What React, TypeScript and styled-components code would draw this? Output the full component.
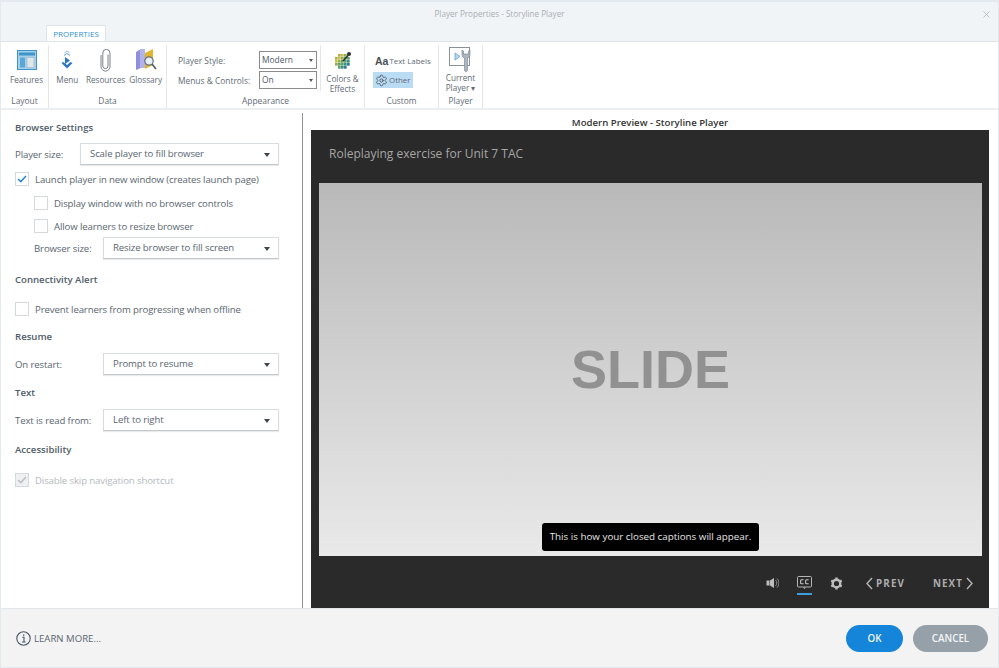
import React from 'react';
import styled, { createGlobalStyle } from 'styled-components';
import { X, Settings as SettingsGlyph } from 'lucide-react';

const GlobalStyle = createGlobalStyle`
  html, body { margin: 0; padding: 0; background: #fff; }
  body { font-family: "Open Sans", "Noto Sans", sans-serif; color: #4d5a66; }
`;

const Win = styled.div`
  width: 999px;
  height: 668px;
  box-sizing: border-box;
  border: 2px solid #e4e9ed;
  border-width: 2px 1px 1px 1px;
  display: flex;
  flex-direction: column;
  overflow: hidden;
  background: #fff;
`;

const TitleBar = styled.div`
  height: 23px;
  flex: none;
  background: #f1f4f7;
  display: flex;
  align-items: center;
  justify-content: center;
  position: relative;
  font-size: 8.1px;
  color: #a9aeb3;
`;

const CloseBtn = styled.span`
  position: absolute;
  right: 6px;
  top: 7px;
  color: #b6bcc2;
  display: flex;
`;

const TabStrip = styled.div`
  height: 16px;
  flex: none;
  background: #f1f4f7;
  border-bottom: 1px solid #dfe4e8;
  padding-left: 45px;
  display: flex;
`;

const Tab = styled.div`
  width: 60px;
  height: 16px;
  box-sizing: border-box;
  background: #fff;
  border: 1px solid #dfe4e8;
  border-bottom: none;
  color: #2f8fd8;
  font-size: 8px;
  text-align: center;
  line-height: 15px;
`;

const Ribbon = styled.div`
  height: 66px;
  flex: none;
  display: flex;
  border-bottom: 2px solid #eceff1;
`;

const Group = styled.div<{ $w: number }>`
  width: ${({ $w }) => $w}px;
  flex: none;
  box-sizing: border-box;
  border-right: 1px solid #e3e7ea;
  margin-top: 3px;
  display: flex;
  flex-direction: column;
`;

const GroupBody = styled.div<{ $pad?: number }>`
  height: 49px;
  box-sizing: border-box;
  padding-left: ${({ $pad }) => $pad ?? 0}px;
  display: flex;
  justify-content: center;
`;

const GroupLabel = styled.div`
  height: 14px;
  line-height: 14px;
  text-align: center;
  font-size: 8.4px;
  color: #5f6b75;
`;

const RibbonButton = styled.div<{ $w: number }>`
  width: ${({ $w }) => $w}px;
  display: flex;
  flex-direction: column;
  align-items: center;
`;

const Caption2 = styled.span`
  font-size: 8.2px;
  line-height: 10px;
  color: #5f6b75;
  text-align: center;
  white-space: nowrap;
`;

const IconSlot = styled.div<{ $top?: number; $bottom?: number }>`
  height: 26px;
  flex: none;
  margin-top: ${({ $top }) => $top ?? 2}px;
  margin-bottom: ${({ $bottom }) => $bottom ?? 2}px;
  display: flex;
  align-items: center;
  justify-content: center;
`;

const StyleForm = styled.div`
  display: flex;
  width: 154px;
  box-sizing: border-box;
  padding: 6px 4px 0 11px;
  height: 46px;
  border-right: 1px solid #e3e7ea;
  flex: none;
`;

const StyleLabels = styled.div`
  width: 81px;
  flex: none;
  font-size: 8.4px;
  color: #5f6b75;
  line-height: 20px;
`;

const StyleSelects = styled.div`
  display: flex;
  flex-direction: column;
  gap: 2px;
`;

const MiniSelect = styled.div`
  width: 58px;
  height: 18px;
  box-sizing: border-box;
  border: 1px solid #8b8b8b;
  font-size: 8.4px;
  line-height: 16px;
  padding-left: 2px;
  color: #4d5a66;
  position: relative;
  &::after {
    content: '';
    position: absolute;
    right: 3px;
    top: 7px;
    border: 2px solid transparent;
    border-top: 3px solid #555;
  }
`;

const CustomCol = styled.div`
  display: flex;
  flex-direction: column;
  gap: 4px;
  box-sizing: border-box;
  padding: 8px 0 0 8px;
  align-items: flex-start;
  width: 73px;
`;

const CustomItem = styled.div<{ $active?: boolean }>`
  display: flex;
  align-items: center;
  gap: 1px;
  height: ${({ $active }) => ($active ? 16 : 15)}px;
  padding: 0 3px 0 2px;
  font-size: 7.9px;
  white-space: nowrap;
  color: #5f6b75;
  background: ${({ $active }) => ($active ? '#b9dbf4' : 'transparent')};
`;

const AaGlyph = styled.span`
  font-size: 10.5px;
  font-weight: 600;
  color: #4a4f55;
  font-family: "Liberation Sans", sans-serif;
`;

const Body = styled.div`
  flex: 1;
  display: flex;
  min-height: 0;
`;

const Settings = styled.div`
  width: 302px;
  flex: none;
  box-sizing: border-box;
  padding: 11px 24px 0 14px;
  position: relative;
  letter-spacing: -0.12px;
  &::after {
    content: '';
    position: absolute;
    right: 0;
    top: 3px;
    bottom: 0;
    width: 1px;
    background: #8d9399;
  }
`;

const Heading = styled.div<{ $top: number }>`
  font-size: 9.6px;
  font-weight: 600;
  color: #4f5d69;
  line-height: 14px;
  letter-spacing: 0;
  margin-top: ${({ $top }) => $top}px;
`;

const FieldRow = styled.div<{ $top: number; $indent?: number }>`
  display: flex;
  align-items: center;
  margin-top: ${({ $top }) => $top}px;
  margin-left: ${({ $indent }) => $indent ?? 0}px;
`;

const FieldLabel = styled.span<{ $w: number }>`
  width: ${({ $w }) => $w}px;
  flex: none;
  font-size: 9.6px;
  color: #5a6670;
`;

const Select = styled.div`
  flex: 1;
  height: 22px;
  box-sizing: border-box;
  border: 1px solid #d7dcdf;
  border-bottom-color: #c3c8cc;
  box-shadow: 0 1px 1px rgba(0, 0, 0, 0.08);
  font-size: 9.6px;
  line-height: 20px;
  padding-left: 9px;
  color: #5a6670;
  position: relative;
  &::after {
    content: '';
    position: absolute;
    right: 8px;
    top: 9px;
    border: 3px solid transparent;
    border-top: 4px solid #3d4650;
    border-bottom: none;
  }
`;

const CheckRow = styled.div<{ $top: number; $indent?: number; $disabled?: boolean }>`
  display: flex;
  align-items: center;
  gap: 6px;
  height: 14px;
  margin-top: ${({ $top }) => $top}px;
  margin-left: ${({ $indent }) => $indent ?? 0}px;
  font-size: 9.6px;
  color: ${({ $disabled }) => ($disabled ? '#b4b9bd' : '#5a6670')};
`;

const CheckBox = styled.span<{ $disabled?: boolean }>`
  width: 14px;
  height: 14px;
  flex: none;
  box-sizing: border-box;
  border: 1px solid #d5d9dc;
  background: ${({ $disabled }) => ($disabled ? '#eef0f1' : '#fff')};
  display: flex;
  align-items: center;
  justify-content: center;
`;

const PreviewPane = styled.div`
  flex: 1;
  padding-left: 8px;
  display: flex;
  flex-direction: column;
  width: 0;
`;

const PreviewTitle = styled.div`
  height: 20px;
  line-height: 26px;
  width: 678px;
  text-align: center;
  font-size: 9.6px;
  font-weight: 600;
  color: #333;
`;

const Player = styled.div`
  width: 678px;
  flex: 1;
  background: #2a2a2a;
  display: flex;
  flex-direction: column;
  padding: 0 7px 0 8px;
  box-sizing: border-box;
`;

const PlayerTitle = styled.div`
  height: 53px;
  line-height: 48px;
  padding-left: 10px;
  font-size: 12px;
  color: #a6a6a6;
`;

const Slide = styled.div`
  height: 373px;
  background: linear-gradient(#b9b9b9, #e9e9e9);
  display: flex;
  align-items: center;
  justify-content: center;
  position: relative;
`;

const SlideText = styled.span`
  font-family: "Liberation Sans", Arial, sans-serif;
  font-weight: 700;
  font-size: 54px;
  color: #919191;
  margin-bottom: 2px;
`;

const Caption = styled.div`
  position: absolute;
  left: 223px;
  bottom: 5px;
  width: 217px;
  height: 28px;
  box-sizing: border-box;
  background: #000;
  border-radius: 3px;
  color: #e6e6e6;
  font-size: 9.8px;
  line-height: 28px;
  text-align: center;
  white-space: nowrap;
`;

const Controls = styled.div`
  flex: 1;
  display: flex;
  align-items: center;
  justify-content: flex-end;
  padding: 2px 9px 0 0;
`;

const NavText = styled.span`
  font-size: 9.8px;
  font-weight: 700;
  letter-spacing: 1.1px;
  color: #adadad;
`;

const NavButton = styled.div<{ $left: number }>`
  display: flex;
  align-items: center;
  gap: 3px;
  margin-left: ${({ $left }) => $left}px;
`;

const IconButton = styled.div<{ $left: number; $active?: boolean }>`
  margin-left: ${({ $left }) => $left}px;
  display: flex;
  position: relative;
  ${({ $active }) =>
    $active &&
    `&::after {
      content: '';
      position: absolute;
      left: 0;
      right: 0;
      bottom: -5px;
      height: 2px;
      background: #3c9ed8;
    }`}
`;

const Footer = styled.div`
  height: 59px;
  flex: none;
  background: #f3f3f3;
  border-top: 1px solid #e3e7ea;
  box-sizing: border-box;
  display: flex;
  align-items: center;
  padding: 0 10px 0 15px;
`;

const LearnMore = styled.div`
  display: flex;
  align-items: center;
  gap: 3px;
  font-size: 9.6px;
  color: #5a6670;
  flex: 1;
`;

const DialogButton = styled.div<{ $w: number; $color: string; $left: number }>`
  width: ${({ $w }) => $w}px;
  height: 27px;
  margin-left: ${({ $left }) => $left}px;
  border-radius: 14px;
  background: ${({ $color }) => $color};
  color: #f2f5f7;
  font-size: 9.8px;
  font-weight: 600;
  line-height: 27px;
  text-align: center;
`;

const FeaturesIcon = () => (
  <svg width="20" height="20" viewBox="0 0 20 20">
    <rect x="0.5" y="0.5" width="19" height="19" fill="#a5d0ec" stroke="#3f93c9" />
    <rect x="2" y="2.5" width="16" height="3" fill="#3f93c9" />
    <rect x="3" y="7.5" width="5" height="10" fill="#5aa7d8" />
    <rect x="10" y="7.5" width="7" height="10" fill="#dfe6ea" stroke="#9fb2bf" strokeWidth="0.6" />
  </svg>
);

const MenuIcon = () => (
  <svg width="14" height="20" viewBox="0 0 14 20" fill="none">
    <path d="M4.5 3 L7 1 L9.5 3" stroke="#8fbde4" strokeWidth="1" />
    <path d="M4 5.5 L7 3.5 L10 5.5" stroke="#6aa6da" strokeWidth="1" />
    <path d="M5 7 L10 10.5 L5 14 Z" fill="#2b76c4" />
    <path d="M1.5 13 L7 18.5 L12.5 13 L10.5 12 L7 15 L3.5 12 Z" fill="#2b76c4" />
  </svg>
);

const ClipIcon = () => (
  <svg width="11" height="24" viewBox="0 0 11 24" fill="none">
    <path
      d="M8 6.5 V18 a2.6 2.6 0 0 1 -5.2 0 V5 a3.6 3.6 0 0 1 7.2 0 V18.5 a4.5 4.5 0 0 1 -9 .2 V7"
      stroke="#7d8185"
      strokeWidth="1"
    />
  </svg>
);

const GlossaryIcon = () => (
  <svg width="22" height="24" viewBox="0 0 22 24">
    <path d="M1 4 L6 1 V20 L1 22 Z" fill="#8f8fdc" />
    <rect x="5" y="1" width="5" height="19" fill="#b3b3ea" />
    <path d="M10 5 L18 1 V17 L10 21 Z" fill="#e2b531" />
    <circle cx="14" cy="13" r="4.2" fill="#e8f0f4" stroke="#66707a" strokeWidth="1.2" />
    <path d="M17 16 L21 21" stroke="#55606a" strokeWidth="1.8" />
  </svg>
);

const ColorsIcon = () => {
  const palette = ['#b9a94a', '#c9c24a', '#8fae52', '#5f9f6a', '#3f8f8a', '#2f7f90'];
  const cells: Array<[number, number, string]> = [];
  for (let row = 0; row < 5; row++) {
    for (let col = 0; col < 5; col++) {
      if ((row === 0 || row === 4) && (col === 0 || col === 4)) continue;
      cells.push([1 + col * 3, 3 + row * 3, palette[Math.min(5, Math.floor((col + row) * 0.75))]]);
    }
  }
  return (
    <svg width="18" height="19" viewBox="0 0 18 19">
      {cells.map(([x, y, c]) => (
        <rect key={`${x}-${y}`} x={x} y={y} width="2.7" height="2.7" fill={c} />
      ))}
      <path d="M9 10 L14.5 4" stroke="#2e3338" strokeWidth="1.5" />
      <circle cx="15" cy="3" r="2" fill="#2e3338" />
    </svg>
  );
};

const CurrentPlayerIcon = () => (
  <svg width="24" height="25" viewBox="0 0 24 25" fill="none">
    <rect x="0.5" y="0.5" width="20" height="18" fill="#fff" stroke="#8a9299" />
    <path d="M6 6 L11 9.5 L6 13 Z" fill="#bcd8ee" stroke="#5f9fd0" strokeWidth="0.8" />
    <path d="M13 3 v5 a3 3 0 0 0 2.5 3 V23 a1.5 1.5 0 0 0 3 0 V11 a3 3 0 0 0 2.5 -3 V3 l-1.5 1 v3 h-5 V4 Z" fill="#aab6c0" stroke="#76828c" strokeWidth="0.6" />
  </svg>
);

const Check = ({ color }: { color: string }) => (
  <svg width="10" height="8" viewBox="0 0 10 8" fill="none">
    <path d="M1 4 L3.8 6.6 L9 1" stroke={color} strokeWidth="1.5" />
  </svg>
);

const InfoIcon = () => (
  <svg width="15" height="15" viewBox="0 0 15 15" fill="none">
    <circle cx="7.5" cy="7.5" r="6.7" stroke="#4a5a68" strokeWidth="1.1" />
    <path d="M6.2 6.3 H8 V11 M6 11 H9.6" stroke="#4a5a68" strokeWidth="1.1" />
    <rect x="7" y="3.4" width="1.3" height="1.4" fill="#4a5a68" />
  </svg>
);

const VolumeIcon = () => (
  <svg width="13" height="12" viewBox="0 0 13 12" fill="none">
    <rect x="0.5" y="3.5" width="3" height="5" fill="#bdbdbd" />
    <path d="M4 3.5 L8 1 V11 L4 8.5 Z" fill="#bdbdbd" />
    <path d="M9.5 3 a4 4 0 0 1 0 6 M11 1.5 a6 6 0 0 1 0 9" stroke="#8a8a8a" />
  </svg>
);

const CcIcon = () => (
  <svg width="15" height="14" viewBox="0 0 15 14" fill="none">
    <rect x="0.5" y="0.5" width="14" height="10.5" rx="1" stroke="#b5b5b5" />
    <path d="M6.6 3.8 h-2 a1 1 0 0 0 -1 1 v2 a1 1 0 0 0 1 1 h2 M11.6 3.8 h-2 a1 1 0 0 0 -1 1 v2 a1 1 0 0 0 1 1 h2" stroke="#c8c8c8" strokeWidth="1.1" />
    <path d="M6 11.5 h3 l-1.5 1.5 Z" fill="#b5b5b5" />
  </svg>
);

const GearIcon = () => (
  <svg width="13" height="13" viewBox="0 0 13 13" fill="none">
    <circle cx="6.5" cy="6.5" r="3.8" stroke="#bdbdbd" strokeWidth="2.4" />
    <path
      d="M6.5 0.5 V2.5 M6.5 10.5 V12.5 M1.3 3.5 L3 4.5 M10 8.5 L11.7 9.5 M1.3 9.5 L3 8.5 M10 4.5 L11.7 3.5"
      stroke="#bdbdbd"
      strokeWidth="2.4"
    />
  </svg>
);

const Chevron = ({ dir }: { dir: 'left' | 'right' }) => (
  <svg width="7" height="13" viewBox="0 0 7 13" fill="none">
    <path d={dir === 'left' ? 'M6 1 L1 6.5 L6 12' : 'M1 1 L6 6.5 L1 12'} stroke="#b5b5b5" strokeWidth="1.4" />
  </svg>
);

export default function App() {
  return (
    <>
      <GlobalStyle />
      <Win>
        <TitleBar>
          Player Properties - Storyline Player
          <CloseBtn>
            <X size={11} strokeWidth={2} />
          </CloseBtn>
        </TitleBar>
        <TabStrip>
          <Tab>PROPERTIES</Tab>
        </TabStrip>
        <Ribbon>
          <Group $w={48}>
            <GroupBody $pad={4}>
              <RibbonButton $w={44}>
                <IconSlot><FeaturesIcon /></IconSlot>
                <Caption2>Features</Caption2>
              </RibbonButton>
            </GroupBody>
            <GroupLabel>Layout</GroupLabel>
          </Group>
          <Group $w={118}>
            <GroupBody>
              <RibbonButton $w={37}>
                <IconSlot><MenuIcon /></IconSlot>
                <Caption2>Menu</Caption2>
              </RibbonButton>
              <RibbonButton $w={40}>
                <IconSlot><ClipIcon /></IconSlot>
                <Caption2>Resources</Caption2>
              </RibbonButton>
              <RibbonButton $w={41}>
                <IconSlot><GlossaryIcon /></IconSlot>
                <Caption2>Glossary</Caption2>
              </RibbonButton>
            </GroupBody>
            <GroupLabel>Data</GroupLabel>
          </Group>
          <Group $w={198}>
            <GroupBody>
              <StyleForm>
                <StyleLabels>
                  Player Style:
                  <br />
                  Menus &amp; Controls:
                </StyleLabels>
                <StyleSelects>
                  <MiniSelect>Modern</MiniSelect>
                  <MiniSelect>On</MiniSelect>
                </StyleSelects>
              </StyleForm>
              <RibbonButton $w={43}>
                <IconSlot $bottom={1}><ColorsIcon /></IconSlot>
                <Caption2>
                  Colors &amp;
                  <br />
                  Effects
                </Caption2>
              </RibbonButton>
            </GroupBody>
            <GroupLabel>Appearance</GroupLabel>
          </Group>
          <Group $w={74}>
            <GroupBody>
              <CustomCol>
                <CustomItem>
                  <AaGlyph>Aa</AaGlyph> Text Labels
                </CustomItem>
                <CustomItem $active>
                  <SettingsGlyph size={13} strokeWidth={1.6} color="#4a5560" /> Other
                </CustomItem>
              </CustomCol>
            </GroupBody>
            <GroupLabel>Custom</GroupLabel>
          </Group>
          <Group $w={44}>
            <GroupBody>
              <RibbonButton $w={46}>
                <IconSlot $top={1} $bottom={1}><CurrentPlayerIcon /></IconSlot>
                <Caption2>
                  Current
                  <br />
                  Player ▾
                </Caption2>
              </RibbonButton>
            </GroupBody>
            <GroupLabel>Player</GroupLabel>
          </Group>
        </Ribbon>
        <Body>
          <Settings>
            <Heading $top={0}>Browser Settings</Heading>
            <FieldRow $top={8}>
              <FieldLabel $w={65}>Player size:</FieldLabel>
              <Select>Scale player to fill browser</Select>
            </FieldRow>
            <CheckRow $top={7}>
              <CheckBox><Check color="#2b86d0" /></CheckBox>
              Launch player in new window (creates launch page)
            </CheckRow>
            <CheckRow $top={10} $indent={19}>
              <CheckBox />
              Display window with no browser controls
            </CheckRow>
            <CheckRow $top={9} $indent={19}>
              <CheckBox />
              Allow learners to resize browser
            </CheckRow>
            <FieldRow $top={4} $indent={19}>
              <FieldLabel $w={69}>Browser size:</FieldLabel>
              <Select>Resize browser to fill screen</Select>
            </FieldRow>
            <Heading $top={14}>Connectivity Alert</Heading>
            <CheckRow $top={15}>
              <CheckBox />
              Prevent learners from progressing when offline
            </CheckRow>
            <Heading $top={14}>Resume</Heading>
            <FieldRow $top={9}>
              <FieldLabel $w={88}>On restart:</FieldLabel>
              <Select>Prompt to resume</Select>
            </FieldRow>
            <Heading $top={11}>Text</Heading>
            <FieldRow $top={9}>
              <FieldLabel $w={88}>Text is read from:</FieldLabel>
              <Select>Left to right</Select>
            </FieldRow>
            <Heading $top={12}>Accessibility</Heading>
            <CheckRow $top={16} $disabled>
              <CheckBox $disabled><Check color="#b9bec2" /></CheckBox>
              Disable skip navigation shortcut
            </CheckRow>
          </Settings>
          <PreviewPane>
            <PreviewTitle>Modern Preview - Storyline Player</PreviewTitle>
            <Player>
              <PlayerTitle>Roleplaying exercise for Unit 7 TAC</PlayerTitle>
              <Slide>
                <SlideText>SLIDE</SlideText>
                <Caption>This is how your closed captions will appear.</Caption>
              </Slide>
              <Controls>
                <IconButton $left={0}><VolumeIcon /></IconButton>
                <IconButton $left={18} $active><CcIcon /></IconButton>
                <IconButton $left={18}><GearIcon /></IconButton>
                <NavButton $left={23}>
                  <Chevron dir="left" />
                  <NavText>PREV</NavText>
                </NavButton>
                <NavButton $left={28}>
                  <NavText>NEXT</NavText>
                  <Chevron dir="right" />
                </NavButton>
              </Controls>
            </Player>
          </PreviewPane>
        </Body>
        <Footer>
          <LearnMore>
            <InfoIcon />
            LEARN MORE...
          </LearnMore>
          <DialogButton $w={57} $color="#1485d8" $left={0}>OK</DialogButton>
          <DialogButton $w={75} $color="#95a0a8" $left={10}>CANCEL</DialogButton>
        </Footer>
      </Win>
    </>
  );
}
